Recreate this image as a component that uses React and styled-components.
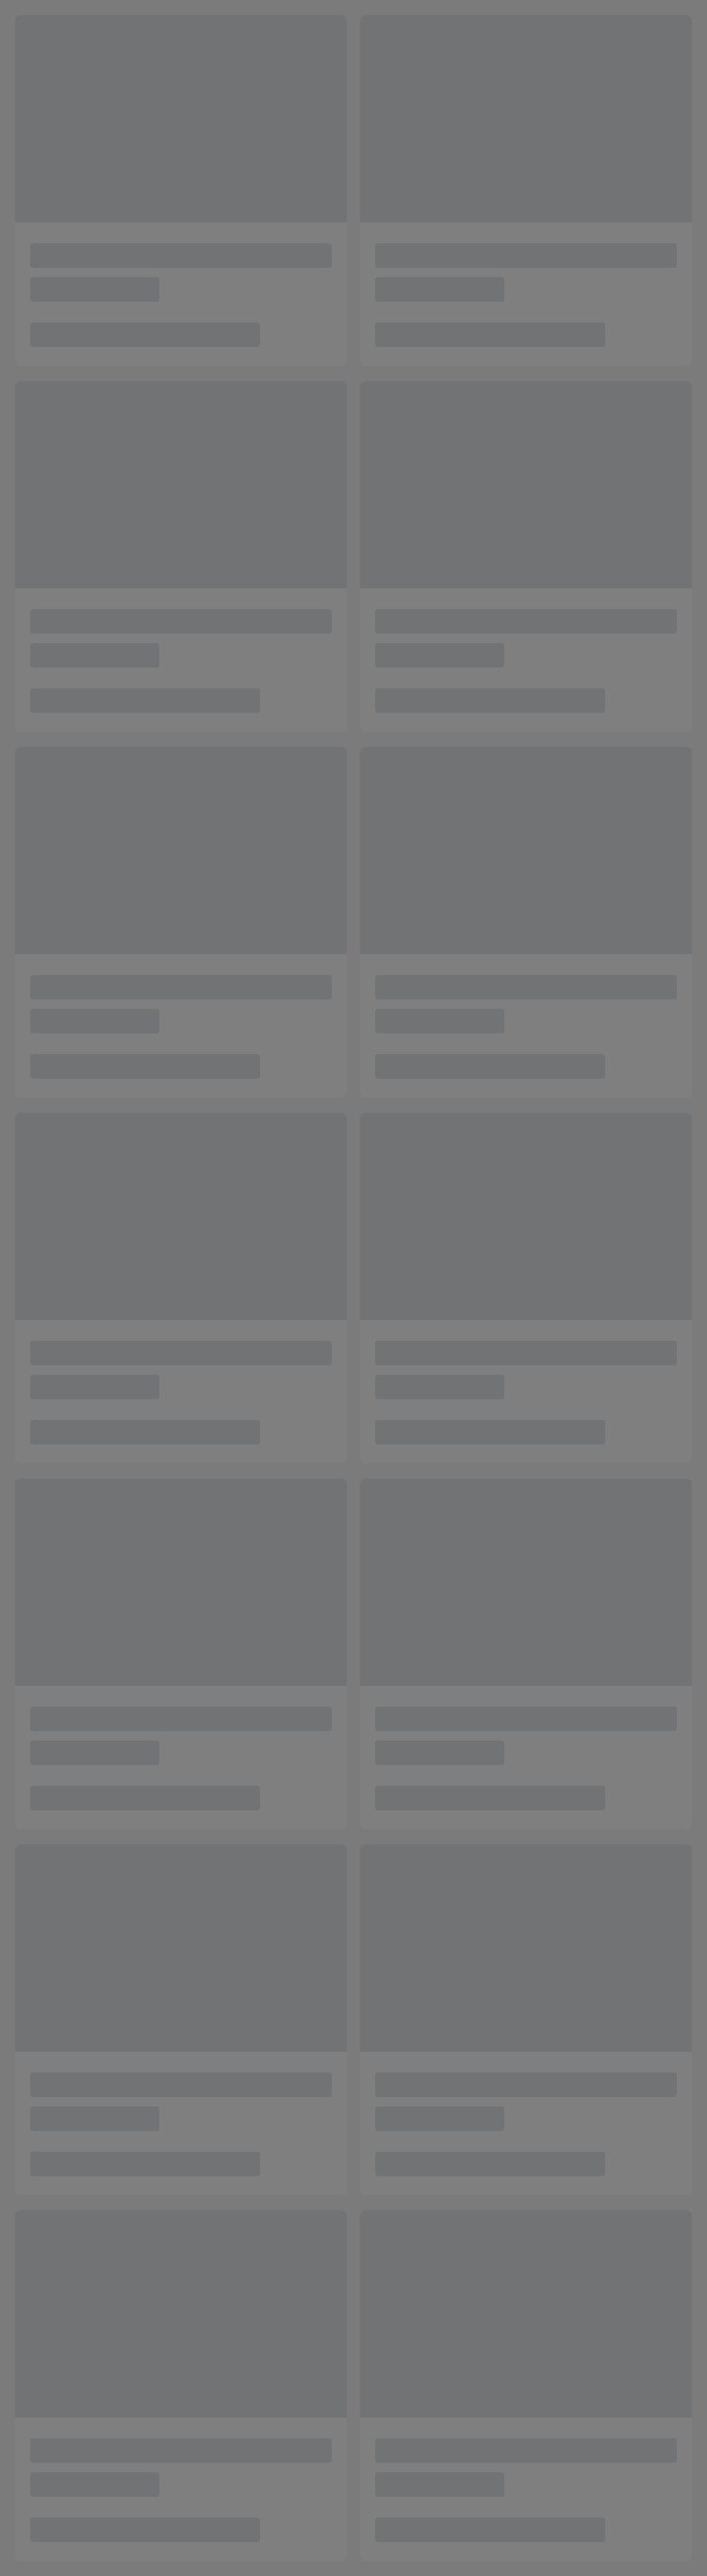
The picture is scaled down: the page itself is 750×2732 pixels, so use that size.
import React from "react";
import styled, { createGlobalStyle } from "styled-components";

const Global = createGlobalStyle`
  html, body { margin: 0; padding: 0; background: #f7f7f7; }
  body { font-family: "Liberation Sans", Arial, sans-serif; }
`;

const Page = styled.div`
  position: relative;
  width: 750px;
  min-height: 2732px;
  box-sizing: border-box;
  padding: 16px;
  background: #f7f7f7;
`;

const Grid = styled.div`
  display: grid;
  grid-template-columns: repeat(2, 352px);
  column-gap: 14px;
  row-gap: 16px;
`;

const Card = styled.div`
  height: 372px;
  background: #ffffff;
  border-radius: 6px;
  overflow: hidden;
  display: flex;
  flex-direction: column;
`;

const Thumb = styled.div`
  height: 220px;
  background: #e5e7eb;
  flex: none;
`;

const Info = styled.div`
  flex: 1;
  padding: 22px 16px 20px;
  display: flex;
  flex-direction: column;
`;

const Bar = styled.div`
  height: 26px;
  width: ${(p) => p.$w}px;
  background: #e5e7eb;
  border-radius: 3px;
  margin-top: ${(p) => p.$mt || 0}px;
`;

const Overlay = styled.div`
  position: fixed;
  inset: 0;
  background: rgba(0, 0, 0, 0.5);
`;

export default function App() {
  const cards = Array.from({ length: 14 });
  return (
    <>
      <Global />
      <Page>
        <Grid>
          {cards.map((_, i) => (
            <Card key={i}>
              <Thumb />
              <Info>
                <Bar $w={320} />
                <Bar $w={137} $mt={10} />
                <Bar $w={244} $mt={22} />
              </Info>
            </Card>
          ))}
        </Grid>
        <Overlay />
      </Page>
    </>
  );
}
